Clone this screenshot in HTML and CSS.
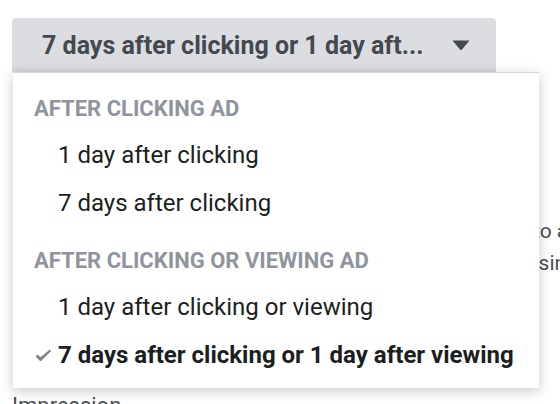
FILE: index.html
```html
<!DOCTYPE html>
<html>
<head>
<meta charset="utf-8">
<link rel="stylesheet" href="styles.css">
</head>
<body>
<div class="page">
  <button class="select">
    <span class="select-label">7 days after clicking or 1 day aft...</span>
    <svg class="caret" width="18" height="12" viewBox="0 0 18 12"><path d="M0.5 1.5 L17.5 1.5 L10 10.5 Q9 11.5 8 10.5 Z" fill="#444950"/></svg>
  </button>
  <div class="behind">
    <p class="behind-line behind-a">to a</p>
    <p class="behind-line behind-b">using</p>
    <p class="behind-line behind-c">Impression</p>
  </div>
  <div class="menu">
    <div class="menu-header">AFTER CLICKING AD</div>
    <div class="menu-item">1 day after clicking</div>
    <div class="menu-item">7 days after clicking</div>
    <div class="menu-header second">AFTER CLICKING OR VIEWING AD</div>
    <div class="menu-item">1 day after clicking or viewing</div>
    <div class="menu-item selected"><svg class="check" width="17" height="13" viewBox="0 0 17 13"><path d="M0.6 7.4 L2.6 5.4 L5.6 8.2 L14.8 0.6 L16.2 2 L6.2 11.8 Q5.5 12.4 4.8 11.8 Z" fill="#808387"/></svg>7 days after clicking or 1 day after viewing</div>
  </div>
</div>
</body>
</html>
```
FILE: styles.css
```css
* { box-sizing: border-box; }
html, body { margin: 0; padding: 0; background: #fff; }
body { font-family: Roboto, "Liberation Sans", sans-serif; width: 560px; height: 404px; overflow: hidden; }
.page { position: relative; padding: 18px 0 0 12px; }
.select {
  display: flex; align-items: center; justify-content: space-between;
  width: 484px; height: 54px; padding: 0 26px 0 30px;
  background: linear-gradient(#dcdde1 0, #dcdde1 90%, #d3d4d8 100%);
  border: none; border-radius: 4px 4px 0 0;
  font-family: Roboto, "Liberation Sans", sans-serif;
  font-weight: bold; font-size: 25px; color: #444950;
}
.select-label { white-space: nowrap; }
.caret { display: block; flex: none; }
.behind { position: relative; }
.behind-line { margin: 0; font-size: 21px; line-height: 28px; color: #4b4f56; position: absolute; white-space: nowrap; }
.behind-a { left: 521px; top: 145px; }
.behind-b { left: 515px; top: 177px; }
.behind-c { left: 0; top: 320px; font-size: 22px; }
.menu {
  position: absolute; left: 13px; top: 72px; width: 526px; height: 316px;
  background: #fff; border-top: 1px solid #d4d5d8;
  box-shadow: 0 3px 12px rgba(0,0,0,0.22);
  padding-top: 14px;
}
.menu-header {
  padding-left: 21px; height: 44px; line-height: 44px;
  font-weight: bold; font-size: 22px; color: #90949c; white-space: nowrap;
}
.menu-header.second { margin-top: 12px; }
.menu-item {
  position: relative; padding-left: 45px; height: 48px; line-height: 48px;
  font-size: 24px; color: #1c1e21; white-space: nowrap;
}
.menu-item.selected { font-weight: bold; }
.check { position: absolute; left: 22px; top: 18px; }
```
